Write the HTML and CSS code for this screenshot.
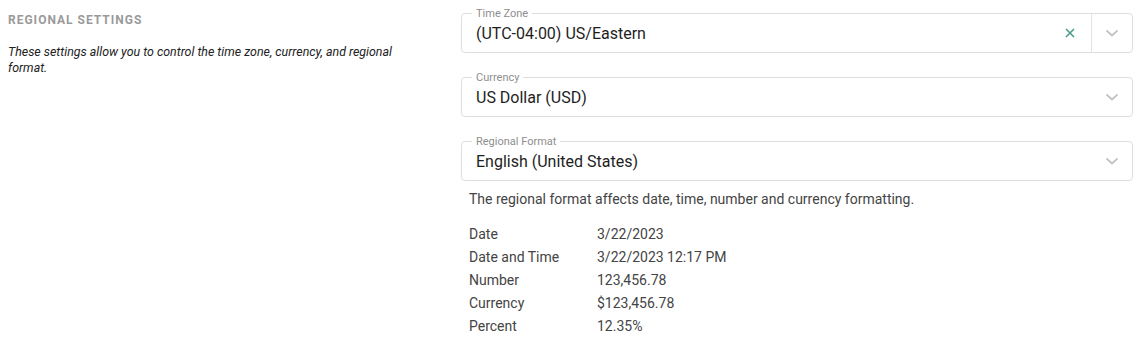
FILE: index.html
```html
<!DOCTYPE html>
<html lang="en">
<head>
  <meta charset="UTF-8">
  <meta name="viewport" content="width=device-width, initial-scale=1.0">
  <title>Regional Settings</title>
  <link rel="stylesheet" href="styles.css">
</head>
<body>
  <div class="settings">
    <div class="intro">
      <div class="section-title">Regional Settings</div>
      <p class="section-desc">These settings allow you to control the time zone, currency, and regional format.</p>
    </div>
    <div class="fields">
      <div class="select">
        <span class="select-label">Time Zone</span>
        <span class="select-value">(UTC-04:00) US/Eastern</span>
        <span class="clear">
          <svg width="12" height="12" viewBox="0 0 12 12"><path d="M2 2 L10 10 M10 2 L2 10" stroke="#4a9d8c" stroke-width="1.6" fill="none"/></svg>
        </span>
        <span class="divider"></span>
        <span class="chevron">
          <svg width="14" height="8" viewBox="0 0 14 8"><path d="M1.5 1.5 L7 6.5 L12.5 1.5" stroke="#c2c2c2" stroke-width="1.7" fill="none"/></svg>
        </span>
      </div>
      <div class="select">
        <span class="select-label">Currency</span>
        <span class="select-value">US Dollar (USD)</span>
        <span class="chevron">
          <svg width="14" height="8" viewBox="0 0 14 8"><path d="M1.5 1.5 L7 6.5 L12.5 1.5" stroke="#c2c2c2" stroke-width="1.7" fill="none"/></svg>
        </span>
      </div>
      <div class="select">
        <span class="select-label">Regional Format</span>
        <span class="select-value">English (United States)</span>
        <span class="chevron">
          <svg width="14" height="8" viewBox="0 0 14 8"><path d="M1.5 1.5 L7 6.5 L12.5 1.5" stroke="#c2c2c2" stroke-width="1.7" fill="none"/></svg>
        </span>
      </div>
      <p class="help">The regional format affects date, time, number and currency formatting.</p>
      <div class="samples">
        <span>Date</span><span>3/22/2023</span>
        <span>Date and Time</span><span>3/22/2023 12:17 PM</span>
        <span>Number</span><span>123,456.78</span>
        <span>Currency</span><span>$123,456.78</span>
        <span>Percent</span><span>12.35%</span>
      </div>
    </div>
  </div>
</body>
</html>
```

FILE: styles.css
```css
body {
  margin: 0;
  font-family: Roboto, "Liberation Sans", Arial, sans-serif;
  color: #222;
  background: #fff;
}
.settings {
  display: grid;
  grid-template-columns: 395px 1fr;
  column-gap: 58px;
  padding: 0 9px 0 8px;
}
.intro {
  padding-top: 12px;
}
.section-title {
  font-size: 12px;
  line-height: 16px;
  font-weight: 700;
  letter-spacing: 1px;
  text-transform: uppercase;
  color: #9a9a9a;
}
.section-desc {
  margin: 16px 0 0;
  font-size: 12.4px;
  line-height: 16px;
  font-style: italic;
  color: #222;
}
.fields {
  display: flex;
  flex-direction: column;
  gap: 24px;
  padding-top: 13px;
}
.select {
  position: relative;
  display: flex;
  align-items: center;
  height: 40px;
  box-sizing: border-box;
  border: 1px solid #dedede;
  border-radius: 4px;
}
.select-label {
  position: absolute;
  top: -7px;
  left: 10px;
  padding: 0 4px;
  background: #fff;
  font-size: 11px;
  line-height: 14px;
  color: #8e8e8e;
}
.select-value {
  flex: 1;
  padding-left: 14px;
  font-size: 16px;
  color: #1e1e1e;
}
.clear {
  display: flex;
  justify-content: center;
  width: 24px;
  margin-right: 9px;
}
.divider {
  align-self: stretch;
  width: 1px;
  background: #e4e4e4;
}
.chevron {
  display: flex;
  justify-content: center;
  width: 40px;
}
.help {
  margin: -16px 0 0 8px;
  font-size: 14px;
  line-height: 20px;
  color: #444;
}
.samples {
  display: grid;
  grid-template-columns: 128px auto;
  margin: -10px 0 0 8px;
  font-size: 14px;
  line-height: 23px;
  color: #444;
}
```
